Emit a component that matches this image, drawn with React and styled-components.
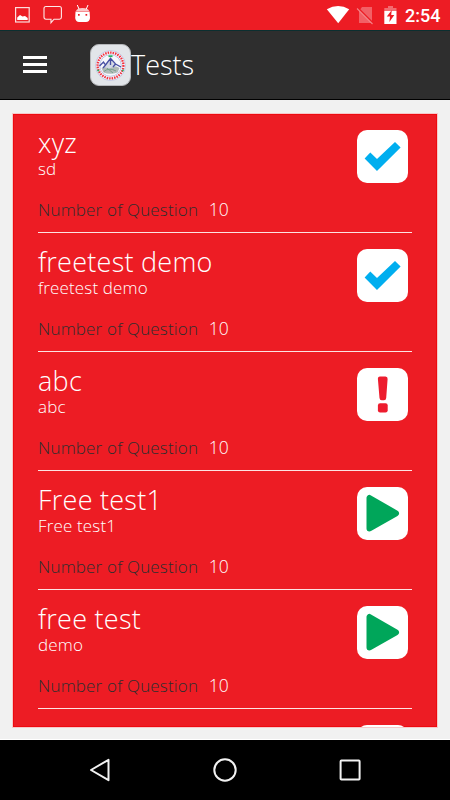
import React from "react";
//STYLE
import styled, { createGlobalStyle } from "styled-components";

const tests = [
  { title: "xyz", subtitle: "sd", count: 10, status: "done" },
  { title: "freetest demo", subtitle: "freetest demo", count: 10, status: "done" },
  { title: "abc", subtitle: "abc", count: 10, status: "alert" },
  { title: "Free test1", subtitle: "Free test1", count: 10, status: "play" },
  { title: "free test", subtitle: "demo", count: 10, status: "play" },
];

const StatusIcon = ({ status }) => (
  <svg width="51" height="53" viewBox="0 0 51 53">
    {status === "done" && (
      <path
        d="M7.6 28.5L13.3 22.6L20 29L38 12L43.6 17.5L20 41Z"
        fill="#00aeef"
      />
    )}
    {status === "alert" && (
      <g fill="#ed1c2e">
        <path d="M23 8.5H28.5Q30.8 8.5 30.6 11L29.2 30Q29 32.3 27 32.3H24.7Q22.7 32.3 22.5 30L20.9 11Q20.7 8.5 23 8.5Z" />
        <rect x="20.9" y="35.2" width="9.8" height="9.2" rx="2.2" />
      </g>
    )}
    {status === "play" && (
      <path
        d="M12.5 11V41.5L39 26.3Z"
        fill="#00a65a"
        stroke="#00a65a"
        strokeWidth="6"
        strokeLinejoin="round"
      />
    )}
  </svg>
);

const CollegeLogo = () => (
  <svg width="31" height="31" viewBox="0 0 31 31">
    <circle cx="15.5" cy="15.5" r="15" fill="#f3f4fb" stroke="#b3bbe0" strokeWidth="0.7" />
    <circle
      cx="15.5"
      cy="15.5"
      r="12.9"
      fill="none"
      stroke="#f2323f"
      strokeWidth="2.3"
      strokeDasharray="1.5 1"
    />
    <circle cx="15.5" cy="15.5" r="10.8" fill="#f7f8fc" stroke="#9aa5d2" strokeWidth="0.6" />
    <path d="M13.5 6.2H17.5" stroke="#27b565" strokeWidth="1.8" />
    <path d="M15.5 9L22 17V21H9V17Z" fill="#d3d8e4" />
    <path d="M6.5 18Q10 16 14 19Q20 15 24.5 18L22.5 22.5Q15 25 8.5 22.5Z" fill="#b1bbb9" />
    <path
      d="M4.5 16L8.5 12L10.5 15L15.5 8.3L20.5 14L26 17M10.5 15L8 18M15.5 8.5V15M20.5 14L18 17"
      fill="none"
      stroke="#4750a3"
      strokeWidth="1.3"
    />
    <path d="M9 21.5Q14 17 21 21M12 18L18 23" stroke="#6a9b81" strokeWidth="0.8" fill="none" />
    <circle cx="3.2" cy="20.5" r="1" fill="#27b565" />
    <circle cx="27.8" cy="20.5" r="1" fill="#27b565" />
  </svg>
);

const App = () => {
  return (
    <Screen>
      <GlobalStyle />
      <StatusBar>
        <svg width="100" height="30" viewBox="0 0 100 30">
          <rect x="15.6" y="7.6" width="13.6" height="14.4" fill="none" stroke="#fff" strokeOpacity=".85" strokeWidth="1.2" />
          <path d="M17.2 20V17.5L20 15L22.5 16.5L25 16L27.7 18V20Z" fill="#fff" />
          <path
            d="M46 6.5H59.5Q61.4 6.5 61.4 8.5V17.3Q61.4 19.2 59.5 19.2H54L51 22.8V19.2H46Q44 19.2 44 17.3V8.5Q44 6.5 46 6.5Z"
            fill="none"
            stroke="#fff"
            strokeOpacity=".9"
            strokeWidth="1.1"
          />
          <path d="M77.3 5L79 9M88 5L86.3 9" stroke="#fff" strokeWidth="1" />
          <path d="M76 11Q77 8 82.5 8Q88.2 8 89.2 11Z" fill="#fff" fillOpacity=".75" />
          <path d="M75.5 11.5H89.6L90 18Q89.5 22 86 22H79Q75.8 22 75.2 18Z" fill="#fff" />
          <rect x="78" y="14" width="1.7" height="1.7" fill="#ed1c24" />
          <rect x="85.5" y="14" width="1.7" height="1.7" fill="#ed1c24" />
        </svg>
        <StatusRight>
          <svg width="74" height="30" viewBox="326 0 74 30">
            <path d="M326.8 9.3Q338.2 2.5 349.2 9.3L338.2 23.3Z" fill="#fff" />
            <path d="M362 7H372V23H359V11Z" fill="#fff" fillOpacity=".3" />
            <path d="M357.5 8L373 23.5" stroke="#ed1c24" strokeWidth="2.4" />
            <path d="M357 8.5L372.5 24" stroke="#fff" strokeOpacity=".45" strokeWidth="1.1" />
            <path d="M384.3 11V8H388V6H393V8H396.5V11Z" fill="#fff" fillOpacity=".35" />
            <path d="M384.3 11H396.5V24H384.3Z" fill="#fff" />
            <path d="M391.8 10L386.8 16.5H390L389.4 22L394.3 15H391.2Z" fill="#ed1c24" />
          </svg>
          <Clock>2:54</Clock>
        </StatusRight>
      </StatusBar>
      <Header>
        <MenuButton aria-label="menu">
          <span></span>
          <span></span>
          <span></span>
        </MenuButton>
        <Logo>
          <CollegeLogo />
        </Logo>
        <PageTitle>Tests</PageTitle>
      </Header>
      <Content>
        <TestList>
          {tests.map((test, i) => (
            <TestRow key={i}>
              <Info>
                <Title>{test.title}</Title>
                <Subtitle>{test.subtitle}</Subtitle>
                <Questions>
                  Number of Question <span>{test.count}</span>
                </Questions>
              </Info>
              <IconBox>
                <StatusIcon status={test.status} />
              </IconBox>
            </TestRow>
          ))}
          {/* next row, only its icon peeks in */}
          <TestRow>
            <Info />
            <IconBox />
          </TestRow>
        </TestList>
      </Content>
      <NavBar>
        <svg width="24" height="28" viewBox="0 0 24 28">
          <path d="M3 14L20.5 3.8V24.2Z" />
        </svg>
        <svg width="26" height="28" viewBox="0 0 26 28">
          <circle cx="13" cy="14" r="10.7" />
        </svg>
        <svg width="24" height="28" viewBox="0 0 24 28">
          <rect x="2.6" y="4.6" width="19" height="19" rx="0.8" />
        </svg>
      </NavBar>
    </Screen>
  );
};

const GlobalStyle = createGlobalStyle`
  * {
    box-sizing: border-box;
  }
  body {
    margin: 0;
    overflow: hidden;
    font-family: "Open Sans", "Noto Sans", sans-serif;
    font-weight: 300;
  }
  svg {
    display: block;
  }
`;
const Screen = styled.div`
  width: 450px;
  height: 800px;
  display: flex;
  flex-direction: column;
  background: #f1f1f1;
  overflow: hidden;
`;
const StatusBar = styled.div`
  height: 30px;
  flex: none;
  display: flex;
  justify-content: space-between;
  background: #ed1c24;
`;
const StatusRight = styled.div`
  display: flex;
  width: 124px;
`;
const Clock = styled.span`
  padding-left: 5px;
  font-family: Roboto, sans-serif;
  font-weight: 500;
  font-size: 18px;
  line-height: 31px;
  color: #fff;
`;
const Header = styled.header`
  height: 70px;
  flex: none;
  display: flex;
  align-items: center;
  padding-left: 23px;
  background: #2e2e2e;
  border-top: 1px solid #0b2f30;
  border-bottom: 1px solid #000;
`;
const MenuButton = styled.button`
  width: 24px;
  display: flex;
  flex-direction: column;
  gap: 4px;
  padding: 0;
  margin-top: -1px;
  border: none;
  background: none;
  span {
    height: 3px;
    background: #fff;
  }
`;
const Logo = styled.div`
  width: 41px;
  height: 42px;
  margin-left: 43px;
  display: flex;
  align-items: center;
  justify-content: center;
  border-radius: 9px;
  border: 1px solid #b5b7ba;
  background: #e2e5e9;
`;
const PageTitle = styled.h1`
  margin: 0;
  font-weight: 300;
  font-size: 27px;
  line-height: 40px;
  color: #fff;
`;
const Content = styled.main`
  flex: 1;
  min-height: 0;
  padding: 13.5px 13px 12px;
  display: flex;
  border-bottom: 1px solid #fff;
`;
const TestList = styled.div`
  flex: 1;
  padding: 0 25px;
  overflow: hidden;
  background: #ed1c24;
  box-shadow: 0 0 0 1px #f6c9ca, inset 0 0 0 1px #ee0a10;
`;
const TestRow = styled.div`
  height: 119.1px;
  display: flex;
  justify-content: space-between;
  padding: 16px 4px 0 0;
  border-bottom: 1px solid #fde3e3;
`;
const Info = styled.div`
  color: #fff;
  white-space: nowrap;
`;
const Title = styled.div`
  height: 28px;
  margin-top: -2px;
  font-size: 27px;
  line-height: 29px;
  letter-spacing: 0.25px;
`;
const Subtitle = styled.div`
  height: 25px;
  font-size: 17px;
  font-weight: 350;
  line-height: 25px;
  letter-spacing: 0.15px;
`;
const Questions = styled.div`
  padding-top: 16px;
  font-size: 17px;
  line-height: 24px;
  letter-spacing: 0.17px;
  color: #2e2e2e;
  span {
    margin-left: 6px;
    font-size: 17.5px;
    font-weight: 350;
    letter-spacing: 0;
    color: #fff;
  }
`;
const IconBox = styled.div`
  width: 51px;
  height: 53px;
  border-radius: 10px;
  background: #fff;
`;
const NavBar = styled.nav`
  height: 60px;
  flex: none;
  display: flex;
  align-items: center;
  justify-content: space-between;
  padding: 0 88px;
  background: #000;
  svg {
    fill: none;
    stroke: #f2f2f2;
    stroke-width: 2;
    stroke-linejoin: round;
  }
`;

export default App;
